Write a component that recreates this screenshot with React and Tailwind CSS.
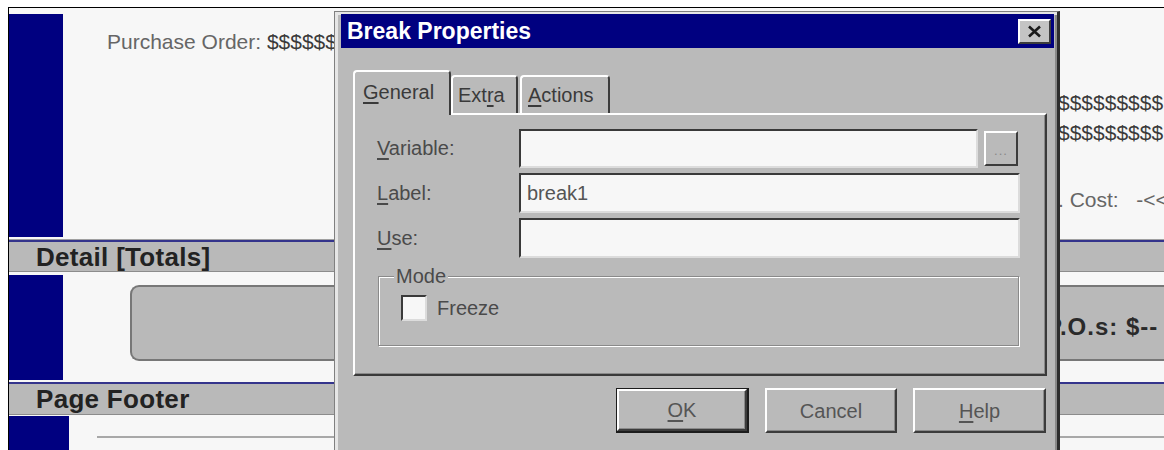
import React from "react";

const NAVY = "bg-[#000080]";

function Underlined({ pre = "", u, post = "" }) {
  return (
    <>
      {pre}
      <span className="underline underline-offset-[3px]">{u}</span>
      {post}
    </>
  );
}

function Band({ title, height }) {
  return (
    <div
      className={`${height} shrink-0 flex items-center border-t-2 border-t-[#34348c] border-b border-b-[#8c8c8c] bg-[#b9b9b9] pl-[27px]`}
    >
      <span className="text-[26px] leading-none font-bold tracking-[0.3px] text-[#222]">{title}</span>
    </div>
  );
}

function RaisedButton({ children, width, isDefault = false }) {
  const inner = (
    <div className="h-full w-full flex items-center justify-center border-2 border-t-white border-l-white border-r-[#3c3c3c] border-b-[#3c3c3c] shadow-[inset_-1px_-1px_0_#8a8a8a] text-[20px] text-[#555]">
      {children}
    </div>
  );
  if (isDefault) {
    return (
      <div className={`${width} h-[45px] border border-[#1c1c1c] border-r-2 border-b-2`}>{inner}</div>
    );
  }
  return <div className={`${width} h-[45px]`}>{inner}</div>;
}

function Field({ className, children }) {
  return (
    <div
      className={`${className} flex items-center border-2 border-t-[#3a3a3a] border-l-[#3a3a3a] border-r-[#dcdcdc] border-b-[#dcdcdc] bg-[#f7f7f7] pl-[6px] text-[20px] text-[#555]`}
    >
      {children}
    </div>
  );
}

function BreakPropertiesDialog() {
  return (
    <div className="absolute left-[334px] top-[11px] w-[726px] h-[470px] bg-[#bababa] border-l border-t border-[#808080] border-r-[3px] border-b-[3px] border-r-[#2e2e2e] border-b-[#2e2e2e] shadow-[inset_3px_3px_0_#e6e6e6,inset_-2px_-2px_0_#8a8a8a] pl-[6px] pr-[3px] pt-[2px] font-['Liberation_Sans',Arial,sans-serif]">
      {/* title bar */}
      <div className={`h-[34px] ${NAVY} flex items-center justify-between pl-[6px] pr-[3px]`}>
        <span className="text-[23px] leading-none font-bold text-white">Break Properties</span>
        <div className="w-[33px] h-[25px] bg-[#c4c4c4] border-2 border-t-white border-l-white border-r-[#3c3c3c] border-b-[#3c3c3c] flex items-center justify-center">
          <svg width="15" height="13" viewBox="0 0 15 13">
            <path d="M2 1.5 L13 11.5 M13 1.5 L2 11.5" stroke="#1a1a1a" strokeWidth="2.6" />
          </svg>
        </div>
      </div>

      <div className="pl-[12px] pr-[7px] pt-[22px]">
        {/* tab strip */}
        <div className="relative z-10 h-[45px] -mb-[2px] flex items-end text-[20px] text-[#3a3a3a]">
          <div className="h-[45px] w-[98px] bg-[#bababa] border-l-2 border-t-2 border-r-2 border-l-white border-t-white border-r-[#3c3c3c] rounded-t-[4px] flex items-center pl-[8px] pb-[4px]">
            <Underlined u="G" post="eneral" />
          </div>
          <div className="h-[38px] w-[67px] mb-[2px] border-l-2 border-t-2 border-r-2 border-l-white border-t-white border-r-[#3c3c3c] rounded-t-[4px] flex items-center pl-[5px]">
            <Underlined pre="Ext" u="r" post="a" />
          </div>
          <div className="h-[38px] w-[90px] ml-[2px] mb-[2px] border-l-2 border-t-2 border-r-2 border-l-white border-t-white border-r-[#3c3c3c] rounded-t-[4px] flex items-center pl-[6px]">
            <Underlined u="A" post="ctions" />
          </div>
        </div>

        {/* General page */}
        <div className="h-[263px] border-2 border-t-white border-l-white border-r-[#3a3a3a] border-b-[#3a3a3a] shadow-[inset_-1px_-1px_0_#8a8a8a] pt-[13px] pl-[22px] text-[20px] text-[#4a4a4a]">
          <div className="flex flex-col gap-[5px]">
            <div className="flex items-center h-[40px]">
              <span className="w-[142px] shrink-0">
                <Underlined u="V" post="ariable:" />
              </span>
              <Field className="w-[459px] h-[39px] shrink-0" />
              <div className="ml-[6px] w-[34px] h-[35px] shrink-0 border-2 border-t-white border-l-white border-r-[#3c3c3c] border-b-[#3c3c3c] flex items-end justify-center pb-[7px] text-[13px] leading-none tracking-[1px] text-[#888]">
                ...
              </div>
            </div>
            <div className="flex items-center h-[40px]">
              <span className="w-[142px] shrink-0">
                <Underlined u="L" post="abel:" />
              </span>
              <Field className="w-[501px] h-[40px] shrink-0">break1</Field>
            </div>
            <div className="flex items-center h-[40px]">
              <span className="w-[142px] shrink-0">
                <Underlined u="U" post="se:" />
              </span>
              <Field className="w-[501px] h-[40px] shrink-0" />
            </div>
          </div>

          <fieldset className="ml-[1px] mt-[7px] w-[641px] h-[81px] border border-[#8a8a8a] shadow-[inset_1px_1px_0_#fff,1px_1px_0_#fff]">
            <legend className="ml-[15px] px-[2px] bg-[#bababa] text-[20px] leading-[22px] text-[#4a4a4a]">Mode</legend>
            <div className="flex items-center mt-[6px] ml-[22px]">
              <div className="w-[26px] h-[26px] border-2 border-t-[#3a3a3a] border-l-[#3a3a3a] border-r-[#dcdcdc] border-b-[#dcdcdc] bg-[#f7f7f7]" />
              <span className="ml-[10px]">Freeze</span>
            </div>
          </fieldset>
        </div>

        {/* command buttons */}
        <div className="mt-[12px] pr-[1px] flex justify-end gap-[16px]">
          <RaisedButton width="w-[133px]" isDefault>
            <Underlined u="O" post="K" />
          </RaisedButton>
          <RaisedButton width="w-[132px]">Cancel</RaisedButton>
          <RaisedButton width="w-[133px]">
            <Underlined u="H" post="elp" />
          </RaisedButton>
        </div>
      </div>
    </div>
  );
}

export default function App() {
  return (
    <div className="relative w-[1164px] h-[450px] overflow-hidden bg-white font-['Liberation_Sans',Arial,sans-serif]">
      <div className="h-full pl-[8px] pt-[7px]">
        <div className="h-full flex flex-col border-l border-t border-black">
          {/* page header section */}
          <section className="relative h-[232px] shrink-0 flex bg-[#f7f7f7] border-b border-[#a0a0a0]">
            <div className={`mt-[6px] mb-[2px] w-[54px] shrink-0 ${NAVY}`} />
            <span className="absolute left-[98px] top-[22px] text-[21px] leading-[24px] whitespace-nowrap text-[#666]">
              Purchase Order: <span className="text-[#3a3a3a]">$$$$$$</span>
            </span>
            <span className="absolute left-[1049px] top-[83px] text-[21px] leading-[24px] whitespace-nowrap text-[#3a3a3a]">
              $$$$$$$$$
            </span>
            <span className="absolute left-[1049px] top-[113px] text-[21px] leading-[24px] whitespace-nowrap text-[#3a3a3a]">
              $$$$$$$$$
            </span>
            <span className="absolute left-[1049px] top-[180px] text-[21px] leading-[24px] whitespace-pre text-[#666]">
              . Cost:   -&lt;&lt;
            </span>
          </section>

          <Band title="Detail [Totals]" height="h-[32px]" />

          {/* detail section */}
          <section className="h-[110px] shrink-0 flex bg-[#f7f7f7]">
            <div className={`mt-[3px] mb-[2px] w-[54px] shrink-0 ${NAVY}`} />
            <div className="ml-[67px] mt-[13px] h-[76px] flex-1 min-w-0 flex items-center pt-[8px] pl-[914px] rounded-l-[9px] border-2 border-r-0 border-[#777] bg-[#b9b9b9] overflow-hidden">
              <span className="text-[24px] leading-none font-bold tracking-[1px] whitespace-nowrap text-[#2a2a2a]">
                P.O.s: $--
              </span>
            </div>
          </section>

          <Band title="Page Footer" height="h-[33px]" />

          {/* page footer section */}
          <section className="flex-1 flex bg-[#f7f7f7]">
            <div className={`mt-[1px] w-[60px] shrink-0 ${NAVY}`} />
            <div className="ml-[28px] mt-[21px] h-[2px] flex-1 bg-[#a8a8a8]" />
          </section>
        </div>
      </div>

      <BreakPropertiesDialog />
    </div>
  );
}
